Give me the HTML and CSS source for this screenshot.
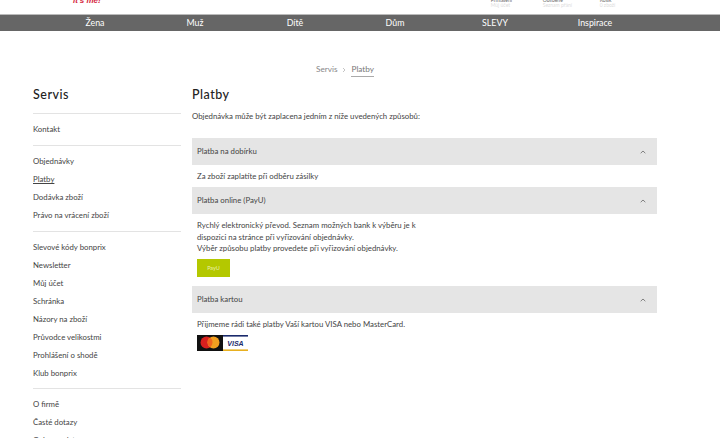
FILE: index.html
```html
<!DOCTYPE html>
<html lang="cs">
<head>
<meta charset="utf-8">
<title>Platby</title>
<link rel="stylesheet" href="styles.css">
</head>
<body>
<header class="top">
  <div class="slogan">it's me!</div>
  <div class="tools">
    <div class="tool tool-a"><span class="tool-name">Přihlášení</span><span class="tool-sub">Můj účet</span></div>
    <div class="tool tool-b"><span class="tool-name">Oblíbené</span><span class="tool-sub">Seznam přání</span></div>
    <div class="tool"><span class="tool-name">Košík</span><span class="tool-sub">0 zboží</span></div>
  </div>
</header>
<nav class="nav">
  <a>Žena</a><a>Muž</a><a>Dítě</a><a>Dům</a><a>SLEVY</a><a>Inspirace</a>
</nav>
<div class="crumbs"><span class="crumb">Servis</span><svg class="crumb-sep" width="4" height="6" viewBox="0 0 4 6"><path d="M1 1l2 2-2 2" fill="none" stroke="#aaa" stroke-width=".7"/></svg><span class="crumb crumb-on">Platby</span></div>
<div class="page">
  <aside class="side">
    <h2 class="side-title">Servis</h2>
    <ul class="group"><li>Kontakt</li></ul>
    <ul class="group"><li>Objednávky</li><li class="on">Platby</li><li>Dodávka zboží</li><li>Právo na vrácení zboží</li></ul>
    <ul class="group group-tight"><li>Slevové kódy bonprix</li><li>Newsletter</li><li>Můj účet</li><li>Schránka</li><li>Názory na zboží</li><li>Průvodce velikostmi</li><li>Prohlášení o shodě</li><li>Klub bonprix</li></ul>
    <ul class="group"><li>O firmě</li><li>Časté dotazy</li><li>Ochrana dat</li></ul>
  </aside>
  <main class="main">
    <h1 class="title">Platby</h1>
    <p class="intro">Objednávka může být zaplacena jedním z níže uvedených způsobů:</p>
    <section>
      <div class="acc">Platba na dobírku<svg class="chev" width="6" height="4" viewBox="0 0 6 4"><path d="M.7 3.2L3 1l2.3 2.2" fill="none" stroke="#666" stroke-width=".8"/></svg></div>
      <div class="body body-short"><p>Za zboží zaplatíte při odběru zásilky</p></div>
      <div class="acc">Platba online (PayU)<svg class="chev" width="6" height="4" viewBox="0 0 6 4"><path d="M.7 3.2L3 1l2.3 2.2" fill="none" stroke="#666" stroke-width=".8"/></svg></div>
      <div class="body body-payu">
        <p>Rychlý elektronický převod. Seznam možných bank k výběru je k<br>dispozici na stránce při vyřizování objednávky.<br>Výběr způsobu platby provedete při vyřizování objednávky.</p>
        <a class="btn">PayU</a>
      </div>
      <div class="acc">Platba kartou<svg class="chev" width="6" height="4" viewBox="0 0 6 4"><path d="M.7 3.2L3 1l2.3 2.2" fill="none" stroke="#666" stroke-width=".8"/></svg></div>
      <div class="body body-card">
        <p>Přijmeme rádi také platby Vaší kartou VISA nebo MasterCard.</p>
        <div class="cards">
          <svg width="26" height="16" viewBox="0 0 26 16"><rect width="26" height="16" fill="#111"/><circle cx="9.5" cy="7.5" r="6" fill="#d8201f"/><circle cx="16.5" cy="7.5" r="6" fill="#f2a020"/><path d="M13 2.6a6 6 0 0 1 0 9.8a6 6 0 0 1 0-9.8z" fill="#f0641e"/></svg>
          <svg width="25" height="16" viewBox="0 0 25 16"><rect width="25" height="16" fill="#fff"/><rect width="25" height="1.6" fill="#1a2a6c"/><rect y="14.4" width="25" height="1.6" fill="#e8b020"/><text class="visa" x="12.5" y="11.3" text-anchor="middle">VISA</text></svg>
        </div>
      </div>
    </section>
  </main>
</div>
</body>
</html>
```
FILE: styles.css
```css
html, body { margin: 0; padding: 0; height: 438px; overflow: hidden; background: #fff; }
body { font-family: "Lato", "Liberation Sans", sans-serif; font-size: 7.8px; color: #444; }
ul, p, h1, h2 { margin: 0; padding: 0; list-style: none; font-weight: 400; }

.top { height: 14px; position: relative; overflow: hidden; display: flex; align-items: flex-end; }
.slogan { margin: 0 0 9px 73px; font: italic 700 8px/9px "Liberation Sans", sans-serif; color: #d5253c; }
.tools { display: flex; margin-left: 390px; align-items: flex-end; padding-bottom: 6px; }
.tool { display: flex; flex-direction: column; font-size: 5px; line-height: 5px; }
.tool-a { width: 52px; }
.tool-b { width: 57px; }
.tool-name { color: #666; }
.tool-sub { color: #ddd; }

.nav { height: 16px; background: #666; border-top: 1px solid #bbb; display: grid; grid-template-columns: repeat(6, 100px); padding-left: 45px; }
.nav a { color: #fff; font-size: 8.8px; line-height: 16px; text-align: center; }

.crumbs { display: flex; justify-content: center; align-items: flex-start; margin-top: 32px; gap: 5px; color: #888; font-size: 8.2px; line-height: 12px; height: 29px; padding-right: 30px; }
.crumb-sep { margin-top: 4px; }
.crumb-on { border-bottom: 1px solid #aaa; height: 12px; padding-bottom: 1px; color: #777; }

.page { display: flex; padding-left: 33px; }
.side { width: 148px; margin-right: 11px; flex: none; }
.side-title { font-size: 12.5px; line-height: 16px; letter-spacing: .5px; color: #222; font-weight: 500; margin-top: -5px; padding-bottom: 10px; }
.group { border-top: 1px solid #e3e3e3; padding: 6px 0 7px; }
.group-tight { padding-bottom: 6px; }
.group li { height: 18px; line-height: 18px; white-space: nowrap; }
.group .on { text-decoration: underline; }

.main { width: 465px; flex: none; }
.title { font-size: 12.5px; line-height: 16px; letter-spacing: .5px; color: #222; font-weight: 500; margin-top: -5px; }
.intro { line-height: 12px; margin-top: 7px; margin-bottom: 16px; }
.acc { height: 27px; line-height: 27px; background: #e5e5e5; padding-left: 5px; display: flex; justify-content: space-between; align-items: center; padding-right: 11px; }
.body { padding-left: 5px; line-height: 11.5px; }
.body-short { height: 22px; padding-top: 6px; box-sizing: border-box; }
.body-payu { height: 72px; padding-top: 6px; box-sizing: border-box; }
.body-card { padding-top: 6px; }
.btn { display: block; width: 33px; height: 18px; margin-top: 4px; background: #b4c800; color: #e9efb0; font-size: 5.5px; line-height: 18px; text-align: center; }
.cards { display: flex; margin-top: 4px; }
.visa { font: italic 700 7px "Liberation Sans", sans-serif; fill: #1a2a6c; }
```
